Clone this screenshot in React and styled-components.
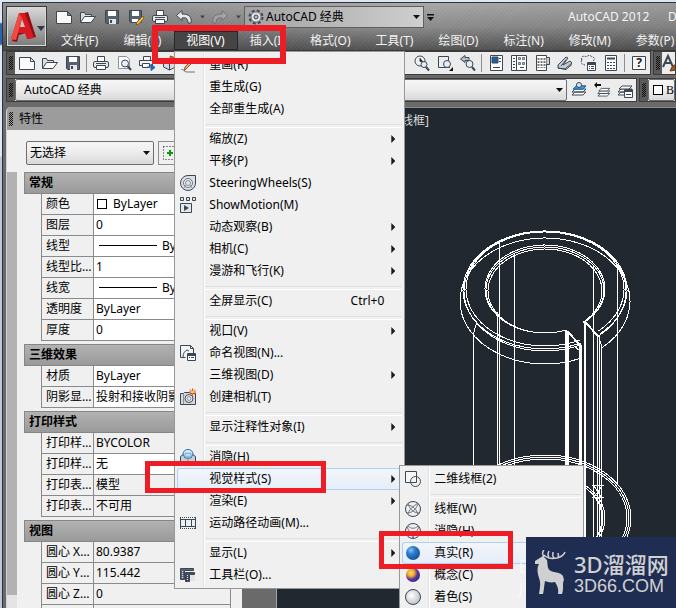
import React from 'react';
import styled, { createGlobalStyle } from 'styled-components';

const GlobalStyle = createGlobalStyle`
  * {
    box-sizing: border-box;
  }

  body {
    margin: 0;
    overflow: hidden;
  }

  body, button, select {
    font-family: 'Noto Sans', 'Noto Sans CJK SC', sans-serif;
    font-size: 12px;
    line-height: 20px;
    color: #000;
  }

  button {
    border: 0;
    padding: 0;
    background: none;
  }

  svg {
    display: block;
  }
`;

const Desktop = styled.div`
  height: 100vh;
  padding: 2px 0 0 2px;
  background: linear-gradient(
    #dde6f0 0 22px,
    #2f62ad 24px 44px,
    #dfe9f5 46px 156px,
    #bcc7da 157px
  );
`;

const Frame = styled.div`
  position: relative;
  height: 100%;
  display: flex;
  flex-direction: column;
  overflow: hidden;
  background: #6a6a6a;
  border-top: 1px solid #30343a;
  border-left: 1px solid #30343a;
`;

const Header = styled.header`
  position: relative;
  z-index: 2;
  display: flex;
  padding-left: 3px;
  background: repeating-linear-gradient(
      135deg,
      rgba(255, 255, 255, 0.04) 0 1px,
      transparent 1px 3px
    ),
    linear-gradient(90deg, rgba(0, 0, 0, 0.16), transparent 60%, rgba(0, 0, 0, 0.08)),
    linear-gradient(#a8a8a8, #8b8b8b 50%, #525252);
  border-bottom: 1px solid #3a3a3a;
`;

const AppButton = styled.button`
  display: grid;
  place-items: center;
  width: 41px;
  height: 41px;
  margin-top: 3px;
  border: 1px solid #3b3b3b;
  box-shadow: inset 0 0 0 1px #d8d8d8;
  background: linear-gradient(#d9d9d9, #7b7b7b);
`;

const HeaderRows = styled.div`
  flex: 1;
  min-width: 0;
`;

const QuickAccess = styled.div`
  display: flex;
  align-items: center;
  height: 28px;
  padding-left: 5px;
`;

const QuickButton = styled.button`
  display: grid;
  place-items: center;
  flex: none;
  width: ${(p) => (p.$narrow ? 12 : 24)}px;
  height: 24px;
`;

const Combo = styled.label`
  position: relative;
  display: flex;
  align-items: center;
  flex: ${(p) => (p.$width ? `0 0 ${p.$width}px` : '1')};
  min-width: 0;
  height: ${(p) => p.$height || 22}px;
  padding-left: 3px;
  border: 1px solid ${(p) => (p.$flat ? '#5f5f5f' : '#6e6e6e')};
  border-radius: ${(p) => (p.$flat ? 0 : 2)}px;
  background: ${(p) =>
    p.$flat
      ? 'linear-gradient(90deg, #a2a2a2, #cfcfcf)'
      : 'linear-gradient(#f6f6f6, #ececec 50%, #d8d8d8)'};

  select {
    flex: 1;
    width: 100%;
    min-width: 0;
    padding: 0 0 0 ${(p) => p.$indent || 0}px;
    border: 0;
    outline: 0;
    appearance: none;
    background: none;
    font-family: ${(p) => (p.$serif ? "'Liberation Serif', serif" : 'inherit')};
  }

  > svg {
    flex: none;
  }

  > svg:last-child {
    margin-right: 3px;
  }
`;

const Title = styled.div`
  flex: 0 0 108px;
  margin-left: auto;
  overflow: hidden;
  white-space: pre;
  color: #f4f4f4;
`;

const MenuBar = styled.nav`
  display: flex;
  height: 19px;
  padding-left: 2px;
`;

const MenuSlot = styled.div`
  position: relative;
  flex: none;

  > button {
    display: block;
    height: 19px;
    padding: 0 13px 0 12px;
    color: ${(p) => (p.$open ? '#fff' : '#f2f2f2')};
    background: ${(p) => (p.$open ? '#454545' : 'none')};
    box-shadow: ${(p) => (p.$open ? 'inset 0 0 0 1px #262626' : 'none')};
    line-height: 19px;
    white-space: nowrap;
  }
`;

const Menu = styled.ul`
  position: absolute;
  z-index: 3;
  left: ${(p) => (p.$sub ? 222 : 0)}px;
  top: ${(p) => (p.$sub ? -3 : 20)}px;
  width: ${(p) => (p.$sub ? 185 : 231)}px;
  margin: 0;
  padding: 2px 2px ${(p) => (p.$sub ? 12 : 2)}px;
  list-style: none;
  border: 1px solid #979797;
  background: linear-gradient(
    90deg,
    #f0f0f0 28px,
    #e0e1e1 28px 29px,
    #fff 29px 30px,
    #f0f0f0 30px
  );
`;

const MenuItem = styled.li`
  position: relative;
  height: 22px;

  > button {
    display: grid;
    grid-template-columns: 29px 1fr auto 18px;
    align-items: center;
    width: 100%;
    height: 22px;
    padding-left: 3px;
    text-align: left;
    white-space: nowrap;
    border-radius: 3px;
    box-shadow: ${(p) => (p.$active ? 'inset 0 0 0 1px #aecff7' : 'none')};
    background: ${(p) =>
      p.$active ? 'linear-gradient(#f3f6fb, #e5edf7)' : 'none'};
  }
`;

const MenuArrow = styled.span`
  justify-self: center;
  width: 4px;
  height: 8px;
  background: #1a1a1a;
  clip-path: polygon(0 0, 100% 50%, 0 100%);
`;

const Separator = styled.li`
  height: 8px;
  padding: 4px 0 2px 28px;

  &::after {
    content: '';
    display: block;
    height: 2px;
    border-top: 1px solid #e0e0e0;
    border-bottom: 1px solid #fff;
  }
`;

const Callout = styled.span`
  position: absolute;
  z-index: 5;
  left: ${(p) => p.$left}px;
  top: ${(p) => p.$top}px;
  width: ${(p) => p.$width}px;
  height: ${(p) => p.$height}px;
  border: ${(p) => p.$line}px solid #ee1c25;
  pointer-events: none;
`;

const ToolRows = styled.div`
  display: flex;
  flex-direction: column;
  gap: 3px;
  padding: 0 0 5px 3px;
`;

const ToolRow = styled.div`
  display: flex;
  gap: 2px;
`;

const Toolbar = styled.div`
  display: flex;
  align-items: center;
  flex: ${(p) => (p.$width ? `0 0 ${p.$width}px` : '1')};
  min-width: 0;
  height: 24px;
  overflow: hidden;
  border: 1px solid #3c3c3c;
  background: #ececec;
`;

const Grip = styled.span`
  display: grid;
  place-items: center;
  flex: 0 0 8px;
  height: 22px;
  background: ${(p) => (p.$plain ? 'none' : '#5a5a5a')};

  &::after {
    content: '';
    width: 4px;
    height: 14px;
    background: repeating-conic-gradient(#111 0 25%, transparent 0 50%) 0 0 / 2px 2px;
  }
`;

const ToolButton = styled.button`
  display: grid;
  place-items: center;
  flex: none;
  width: 23px;
  height: 22px;
  margin-left: ${(p) => (p.$push ? 'auto' : 0)};
`;

const ToolLine = styled.span`
  flex: none;
  width: 1px;
  height: 18px;
  margin: 0 2px;
  background: #8d8d8d;
`;

const Body = styled.div`
  flex: 1;
  display: flex;
  min-height: 0;
  padding-left: 3px;
`;

const Palette = styled.aside`
  flex: 0 0 236px;
  display: flex;
  flex-direction: column;
  border-radius: 5px 0 0 0;
  border-left: 1px solid #d2d2d2;
  background: #f0f0f0;
  overflow: hidden;
`;

const PaletteTitle = styled.div`
  display: flex;
  align-items: center;
  gap: 4px;
  flex: 0 0 23px;
  background: #9c9c9c;
`;

const PaletteTools = styled.div`
  display: flex;
  align-items: center;
  gap: 4px;
  flex: 0 0 42px;
  padding: 4px 0 0 19px;
`;

const PickButton = styled.button`
  display: grid;
  place-items: center;
  width: 24px;
  height: 24px;
  border: 1px solid #8c8c8c;
  background: #f0f0f0;
`;

const PaletteScroll = styled.div`
  flex: 1;
  display: flex;
  gap: 7px;
  min-height: 0;
`;

const Track = styled.div`
  flex: 0 0 10px;
  background: #b2b2b2;
  border-bottom: 13px solid #e4e4e4;
`;

const Sections = styled.div`
  flex: 1;
  margin-right: 11px;
  overflow: hidden;
`;

const Section = styled.section`
  margin-bottom: 3px;

  h3 {
    height: 22px;
    margin: 0;
    padding-left: 4px;
    font-size: 12px;
    line-height: 20px;
    border: 1px solid #868686;
    background: linear-gradient(#b2b2b2, #9a9a9a);
  }
`;

const PropTable = styled.table`
  width: calc(100% - 17px);
  margin-left: 17px;
  table-layout: fixed;
  border-spacing: 0;
  border-left: 1px solid #8a8a8a;

  th, td {
    height: 21px;
    padding: 0 0 0 4px;
    overflow: hidden;
    font-weight: 400;
    text-align: left;
    text-overflow: ellipsis;
    white-space: nowrap;
    border-right: 1px solid #8a8a8a;
    border-bottom: 1px solid #8a8a8a;
  }

  th {
    width: 52px;
    padding-right: 1px;
  }

  td {
    padding-left: 2px;
    text-overflow: clip;
  }
`;

const PropValue = styled.td`
  background: ${(p) => (p.$readOnly ? '#f0f0f0' : '#fff')};
`;

const Swatch = styled.span`
  display: inline-block;
  flex: none;
  width: 10px;
  height: 10px;
  margin: 0 ${(p) => (p.$bar ? 0 : 6)}px 0 1px;
  vertical-align: -1px;
  border: 1px solid #000;
  background: #fff;
`;

const LineSample = styled.span`
  display: inline-block;
  width: 58px;
  height: 1px;
  margin: 0 5px 0 3px;
  vertical-align: 4px;
  background: #000;
`;

const Canvas = styled.main`
  position: relative;
  flex: 1;
  min-width: 0;
  margin-left: 34px;
  overflow: hidden;
  border-top: 1px solid #8a8a8a;
  border-left: 1px solid #a5a5a5;
  background: #212830;
`;

const ViewLabel = styled.div`
  width: 152px;
  padding-top: 3px;
  color: #dcdcdc;
  text-align: right;
  white-space: nowrap;
`;

const Model = styled.svg`
  position: absolute;
  left: 0;
  top: 0;
`;

const Ghost = styled.div`
  position: absolute;
  z-index: 6;
  right: 126px;
  bottom: 12px;
  color: rgba(255, 255, 255, 0.6);
  font-size: 18px;
`;

const Brand = styled.div`
  position: absolute;
  z-index: 7;
  right: 0;
  bottom: 0;
  display: flex;
  align-items: center;
  gap: 6px;
  width: 150px;
  height: 71px;
  padding-left: 8px;
  color: #d0d1d3;
  background: #202d53;
`;

const BrandText = styled.div`
  white-space: nowrap;

  strong {
    display: block;
    font-size: 22px;
    font-weight: 500;
    line-height: 26px;
  }

  span {
    display: block;
    font-family: 'Liberation Sans', sans-serif;
    font-size: 18px;
    line-height: 18px;
  }
`;

const sheets = (
  <>
    <path d="M1 13l3-3h11l-3 3zM1 10l3-3h11l-3 3z" fill="#fff" />
    <path d="M2 7l3-3h10l-3 3z" fill="#fff" />
  </>
);

const glyphs = {
  new: <path d="M.5 2.500h11l4 4v8h-15zM11.500 2.500v4h4" fill="#fafafa" />,
  open: (
    <>
      <path d="M.5 13.500v-10h4l1 2h6v2" fill="#ddd" />
      <path d="M.5 13.500l4-6h11l-4.500 6z" fill="#fafafa" />
    </>
  ),
  save: (
    <>
      <path d="M1.500 1.500h13v13h-12l-1-1z" fill="#57616e" />
      <path d="M4 2h8v5h-8z" fill="#fff" stroke="none" />
      <path d="M5 10h7v5h-7z" fill="#e6e6e6" stroke="none" />
      <path d="M7 11v3" strokeWidth="2" />
    </>
  ),
  saveAs: (
    <>
      <path d="M1.500 1.500h12v12h-11l-1-1z" fill="#57616e" />
      <path d="M4 2h7v5h-7zM4 10h6v3h-6z" fill="#fff" stroke="none" />
      <path d="M15 7l-6 6-1 3 3-1 5-6z" fill="#f2c14e" stroke="#8a5a12" />
    </>
  ),
  print: (
    <>
      <path d="M4.500 6v-4.500h7v4.500" fill="#fff" />
      <rect x=".5" y="6.500" width="15" height="6" rx="1.500" fill="#e8e8e8" />
      <path d="M3.500 10.500h9v4h-9z" fill="#fff" />
      <path d="M3 8.500h10" />
    </>
  ),
  preview: (
    <>
      <path d="M2.500 1.500h8l3 3v9h-11z" fill="#fff" stroke="#8a929c" />
      <circle cx="9" cy="8.500" r="3.500" fill="#e9eef4" />
      <path d="M11.500 11l3.500 4" strokeWidth="2" />
    </>
  ),
  publish: (
    <>
      <path d="M4.500 5v-3.500h7v3.500M.5 5.500h13v5h-13z" fill="#f4f4f4" />
      <path d="M3.500 8.500h7v4h-7z" fill="#fff" />
      <path d="M8 12h5M12 9l4 3.500-4 3z" fill="#1c6ab2" stroke="#1c6ab2" />
    </>
  ),
  cube: (
    <>
      <path d="M1.500 6l6-3 6 3v6l-6 3-6-3zM1.500 6l6 3 6-3M7.500 9v6" fill="#d5dbe2" />
      <path d="M8 1l6 2-3 4z" fill="#e8622a" stroke="#b84412" />
    </>
  ),
  undo: <path d="M6 1.500L.5 6.500 6 11.500V9c4-1 6 .5 6 5h3c1-6-2-9-9-9z" fill="#e9e9e9" />,
  redo: (
    <path
      d="M10 1.500l5.500 5-5.500 5V9c-4-1-6 .5-6 5H1c-1-6 2-9 9-9z"
      fill="#a3a3a3"
      stroke="#6d7279"
    />
  ),
  gear: (
    <>
      <circle cx="8" cy="8" r="6.500" fill="none" strokeWidth="2" strokeDasharray="3 2.100" />
      <circle cx="8" cy="8" r="5" fill="#e6e6e6" stroke="#6c7580" />
      <circle cx="8" cy="8" r="2" fill="#bbb" />
    </>
  ),
  zoomTime: (
    <>
      <circle cx="6" cy="6" r="5" fill="#f3f3f3" />
      <path d="M6 3v3.500h3" />
      <circle cx="10" cy="9.500" r="3" fill="#e4edf5" />
      <path d="M12 12l3 3.500" strokeWidth="2" />
    </>
  ),
  zoomWindow: (
    <>
      <path d="M1.500 1.500h10v11h-10z" fill="none" />
      <circle cx="10" cy="9" r="3.500" fill="#e4edf5" />
      <path d="M12 12l1 1" />
      <path d="M16 12v4h-4z" fill="#111" stroke="none" />
    </>
  ),
  zoomBack: (
    <>
      <path d="M5 .5L.5 4 5 7.500V5.500h4v-3h-4z" fill="#b8bec6" />
      <circle cx="9.500" cy="9" r="3.500" fill="#e4edf5" />
      <path d="M12 12l3 3.500" strokeWidth="2" />
    </>
  ),
  properties: (
    <>
      <path d="M2.500.5h12v15h-12z" fill="#fff" />
      <path d="M4 2h6v6h-6z" fill="#1f5fa5" />
      <path d="M11 3.500h2M11 6.500h2M5 12.500h7" />
    </>
  ),
  designCenter: (
    <>
      <path d="M.5.500h15v15h-15zM5.500.500v15" fill="#fff" />
      <path d="M2 3.500h2M2 6.500h2M2 9.500h2M2 12.500h2M9 12.500h4" />
      <path
        d="M7.500 2.500h2v2h-2zM11.500 2.500h2v2h-2zM7.500 7.500h2v2h-2zM11.500 7.500h2v2h-2z"
        fill="#bbb"
        stroke="#6c7580"
      />
    </>
  ),
  toolPalette: (
    <>
      <path d="M2.500.5h10v15h-10z" fill="#fff" />
      <path d="M12.500 2.500h3v7h-3" fill="#ccc" />
      <path
        d="M4.500 3v10M7.500 3v10M10.500 3v10"
        stroke="#777"
        strokeWidth="2"
        strokeDasharray="2 1"
      />
    </>
  ),
  sheetSet: (
    <>
      <path d="M1 10l8-8 2 1-5 7 7-4 2 2-7 6-7-1z" fill="#c4cad1" />
      <path d="M1 13l8 1.500 6-5M4 11l5-6" fill="none" />
    </>
  ),
  markup: (
    <>
      <path
        d="M2 5c-2-3 2-5 4-3 2-2 5-2 6 0 3 0 3 3 1 4M2 5c-2 2 0 5 3 5"
        fill="none"
        strokeDasharray="2 1"
      />
      <path d="M7.500 7.500h8v8h-8z" fill="#fff" />
      <path d="M8 9h7" strokeWidth="2" />
      <path d="M9 11.500h1M11 11.500h3M9 13.500h1M11 13.500h3" />
    </>
  ),
  calc: (
    <>
      <path d="M2.500.5h11v15h-11z" fill="#fff" />
      <path d="M4 3.500h8" strokeWidth="2" />
      <path d="M4 7.500h8M4 10.500h8M4 13.500h8" strokeDasharray="2 1" />
    </>
  ),
  brush: (
    <>
      <path d="M1 12L6 1l5 11M3 8h6" fill="none" strokeWidth="2" />
      <path d="M15 8l-5 4-2 4 6-1 3-5z" fill="#a6561f" stroke="#6f3a15" />
    </>
  ),
  layers: (
    <>
      {sheets}
      <path d="M2 7l3-3h10l-3 3z" fill="#3a9be0" stroke="#1c6ab2" />
      <circle cx="8" cy="3" r="2.500" fill="#dce6f0" />
    </>
  ),
  layerBack: (
    <>
      <g transform="translate(3 3) scale(.85)">{sheets}</g>
      <path d="M0 3l3-3v2h4v2H3v2z" fill="#111" stroke="none" />
    </>
  ),
  layerStates: (
    <>
      {sheets}
      <path d="M7.500 7.500h8v8h-8z" fill="#fff" />
      <path d="M8 9h7" strokeWidth="2" />
      <path d="M9 12.500h5" />
    </>
  ),
  pencil: (
    <>
      <path d="M14 4L7 11l-3 3 1-4 7-7z" fill="#e9b56b" stroke="#8a5a2a" />
      <path d="M1 13c2-2 3 2 6 2h8" fill="none" stroke="#777" />
    </>
  ),
  wheel: (
    <>
      <path d="M8 .5h7.500V8A7.500 7.500 0 1 1 8 .5z" fill="#dde1e6" />
      <circle cx="8" cy="8" r="4.500" fill="#eee" stroke="#6c7580" />
      <circle cx="8" cy="8" r="2.500" fill="#e2e6ec" stroke="#8a929c" />
      <path d="M4 13l2-3M12 13l-2-3" stroke="#8a929c" />
    </>
  ),
  motion: (
    <>
      <path d="M.5.500h3v3h-3zM6.500.500h3v3h-3zM12.500.500h3v3h-3zM.5 6.500h11v9h-11z" fill="#e4e7eb" />
      <path d="M4 8l5 3-5 3z" fill="#3c4754" stroke="none" />
    </>
  ),
  namedView: (
    <>
      <path d="M.5 12.500v-12h10l3 3v5M10.500.5v3h3M.5 12.500h5" fill="#f4f4f4" />
      <path d="M3 12c0-4 2-6 4-7l2 1" fill="none" />
      <path d="M7.500 8.500h8v7h-8z" fill="#fff" />
      <path d="M8 10h7" strokeWidth="2" />
      <path d="M9 12.500h1M11 12.500h3" />
    </>
  ),
  camera: (
    <>
      <path d="M.5 4.500h3l1-1h5l1 1h5v11h-15z" fill="#d5d9de" />
      <path d="M3.500 5v10" stroke="#8a929c" />
      <circle cx="9" cy="9.500" r="4" fill="#f2f4f6" />
      <circle cx="9" cy="9.500" r="2" fill="#dfe5ec" stroke="#8a929c" />
      <path d="M12.500-.5v7M9 3h7M10 .5l5 5M15 .5l-5 5" stroke="#e2461f" />
      <circle cx="12.500" cy="3" r="1.500" fill="#ffd23c" stroke="none" />
    </>
  ),
  hide: (
    <>
      <path d="M.5 7.500l4-3h7l4 3v8h-15z" fill="#c9ced4" />
      <path d="M8 15V9" stroke="#8a929c" />
      <path d="M3 5a5 4.500 0 0 1 10 0l-2 4H5z" fill="#e4f2fb" stroke="#1c6ab2" />
      <path d="M5 4h6v4H5z" fill="#bcdcf2" stroke="#6aaad6" />
    </>
  ),
  film: (
    <>
      <path d="M0 2.500h16v11H0z" fill="#eef0f2" stroke="none" />
      <path d="M0 2.500h16M0 13.500h16" strokeDasharray="1 1" />
      <path d="M0 4.500h16M0 11.500h16M5.500 4v8M11.500 4v8M.5 2v12M15.500 2v12" />
    </>
  ),
  bars: (
    <>
      <path d="M.5 1.500h13v2h-9v9h-4z" fill="#5a6470" />
      <path d="M5.500 5.500h9v2h-5v7h-4z" fill="#444e5a" />
      <path d="M10 8h5v6h-5z" fill="#e2e4e6" stroke="none" />
      <path d="M2.500 4v8M7.500 8v6" stroke="#ddd" strokeDasharray="1 1" />
    </>
  ),
  wire2d: (
    <>
      <path d="M.5.500h11v11h-11z" fill="#f6f6f6" />
      <circle cx="10.500" cy="10.500" r="5" fill="none" />
    </>
  ),
  wire3d: (
    <>
      <circle cx="8" cy="8" r="7.500" fill="#f0f0f0" />
      <path
        d="M3 2c1 5 5 10 11 10M13 2c-1 5-5 10-11 10M3 13c1-4 4-7 10-11M13 14C12 8 7 4 2 4"
        fill="none"
        stroke="#6c7580"
      />
    </>
  ),
  hidden3d: (
    <>
      <circle cx="8" cy="8" r="7.500" fill="#f0f0f0" />
      <path
        d="M2 4c3 6 5 7 6 11M14 4c-3 6-5 7-6 11M3 3c3 3 7 3 10 0"
        fill="none"
        stroke="#6c7580"
      />
    </>
  ),
  real: <circle cx="8" cy="8" r="7" fill="url(#ballBlue)" stroke="none" />,
  concept: <circle cx="8" cy="8" r="7" fill="url(#ballWarm)" stroke="none" />,
  shaded: <circle cx="8" cy="8" r="7.500" fill="url(#ballGrey)" />,
  pick: (
    <>
      <path d="M1.500 1.500h13v13h-13z" fill="none" stroke="#222" strokeDasharray="1 2" />
      <path d="M8 5v6M5 8h6" stroke="#0c9a0c" strokeWidth="2" />
    </>
  ),
};

const Icon = ({ name }) => (
  <svg
    width="16"
    height="16"
    viewBox="0 0 16 16"
    stroke="#3c4754"
    strokeWidth="1"
    overflow="visible"
    aria-hidden="true"
  >
    {glyphs[name]}
  </svg>
);

const Caret = ({ width = 7, color = '#111', bar }) => (
  <svg width={width} height={bar ? 7 : 4} viewBox={bar ? '0 -3 7 7' : '0 0 7 4'} aria-hidden="true">
    {bar && <path d="M0-3h7v1.500h-7z" fill={color} />}
    <path d="M0 0h7L3.500 4z" fill={color} />
  </svg>
);

const GradientDefs = styled.svg`
  position: absolute;
`;

const Gradients = () => (
  <GradientDefs width="0" height="0" aria-hidden="true">
    <defs>
      <radialGradient id="ballBlue" cx=".35" cy=".3" r=".7">
        <stop offset="0" stopColor="#8cc4f0" />
        <stop offset=".4" stopColor="#2e7fd0" />
        <stop offset="1" stopColor="#17549c" />
      </radialGradient>
      <radialGradient id="ballWarm" cx=".35" cy=".35" r=".7">
        <stop offset="0" stopColor="#ffe36a" />
        <stop offset=".35" stopColor="#f4a92c" />
        <stop offset=".65" stopColor="#5b3a9c" />
        <stop offset="1" stopColor="#34268c" />
      </radialGradient>
      <radialGradient id="ballGrey" cx=".4" cy=".4" r=".65">
        <stop offset="0" stopColor="#fff" />
        <stop offset="1" stopColor="#b9bfc6" />
      </radialGradient>
    </defs>
  </GradientDefs>
);

const visualStyles = [
  { text: '二维线框(2)', icon: 'wire2d' },
  null,
  { text: '线框(W)', icon: 'wire3d' },
  { text: '消隐(H)', icon: 'hidden3d' },
  {
    text: '真实(R)',
    icon: 'real',
    active: true,
    callout: { $left: -23, $top: -11, $width: 134, $height: 38, $line: 5 },
  },
  { text: '概念(C)', icon: 'concept' },
  { text: '着色(S)', icon: 'shaded' },
];

const viewMenu = [
  { text: '重画(R)', icon: 'pencil' },
  { text: '重生成(G)' },
  { text: '全部重生成(A)' },
  null,
  { text: '缩放(Z)', more: true },
  { text: '平移(P)', more: true },
  { text: 'SteeringWheels(S)', icon: 'wheel' },
  { text: 'ShowMotion(M)', icon: 'motion' },
  { text: '动态观察(B)', more: true },
  { text: '相机(C)', more: true },
  { text: '漫游和飞行(K)', more: true },
  null,
  { text: '全屏显示(C)', keys: 'Ctrl+0' },
  null,
  { text: '视口(V)', more: true },
  { text: '命名视图(N)...', icon: 'namedView' },
  { text: '三维视图(D)', more: true },
  { text: '创建相机(T)', icon: 'camera' },
  null,
  { text: '显示注释性对象(I)', more: true },
  null,
  { text: '消隐(H)', icon: 'hide' },
  {
    text: '视觉样式(S)',
    more: true,
    active: true,
    items: visualStyles,
    callout: { $left: -32, $top: -7, $width: 181, $height: 32, $line: 5 },
  },
  { text: '渲染(E)', more: true },
  { text: '运动路径动画(M)...', icon: 'film' },
  null,
  { text: '显示(L)', more: true },
  { text: '工具栏(O)...', icon: 'bars' },
];

const menus = [
  '文件(F)',
  '编辑(E)',
  '视图(V)',
  '插入(I)',
  '格式(O)',
  '工具(T)',
  '绘图(D)',
  '标注(N)',
  '修改(M)',
  '参数(P)',
];

const sections = [
  {
    title: '常规',
    rows: [
      ['颜色', 'ByLayer', 'swatch'],
      ['图层', '0'],
      ['线型', 'ByLayer', 'line'],
      ['线型比例', '1'],
      ['线宽', 'ByLayer', 'line'],
      ['透明度', 'ByLayer'],
      ['厚度', '0'],
    ],
  },
  {
    title: '三维效果',
    rows: [
      ['材质', 'ByLayer'],
      ['阴影显示', '投射和接收阴影'],
    ],
  },
  {
    title: '打印样式',
    rows: [
      ['打印样式', 'BYCOLOR', 'fixed'],
      ['打印样式表', '无'],
      ['打印表附着到', '模型', 'fixed'],
      ['打印表类型', '不可用', 'fixed'],
    ],
  },
  {
    title: '视图',
    rows: [
      ['圆心 X 坐标', '80.9387', 'fixed'],
      ['圆心 Y 坐标', '115.442', 'fixed'],
      ['圆心 Z 坐标', '0', 'fixed'],
      ['', '', 'fixed'],
    ],
  },
];

const MenuList = ({ items, sub }) => (
  <Menu $sub={sub}>
    {items.map((item, i) =>
      item ? (
        <MenuItem key={item.text} $active={item.active}>
          <button type="button">
            <span>{item.icon && <Icon name={item.icon} />}</span>
            <span>{item.text}</span>
            <span>{item.keys}</span>
            {item.more && <MenuArrow />}
          </button>
          {item.items && <MenuList items={item.items} sub />}
          {item.callout && <Callout {...item.callout} />}
        </MenuItem>
      ) : (
        <Separator key={i} />
      )
    )}
  </Menu>
);

const Dropdown = ({ label, value, icon, caret = true, ...rest }) => (
  <Combo {...rest}>
    {icon}
    <select aria-label={label} defaultValue={value}>
      <option>{value}</option>
    </select>
    {caret && <Caret />}
  </Combo>
);

const Tools = ({ names }) =>
  names.map((name) => (
    <ToolButton key={name} type="button" aria-label={name}>
      <Icon name={name} />
    </ToolButton>
  ));

const PropertyPalette = () => (
  <Palette>
    <PaletteTitle>
      <Grip $plain />
      特性
    </PaletteTitle>
    <PaletteTools>
      <Dropdown label="选择" value="无选择" $width={128} $height={24} />
      <PickButton type="button" aria-label="快速选择">
        <Icon name="pick" />
      </PickButton>
    </PaletteTools>
    <PaletteScroll>
      <Track />
      <Sections>
        {sections.map(({ title, rows }) => (
          <Section key={title}>
            <h3>{title}</h3>
            <PropTable>
              <tbody>
                {rows.map(([name, value, kind]) => (
                  <tr key={name}>
                    <th scope="row">{name}</th>
                    <PropValue $readOnly={kind === 'fixed'}>
                      {kind === 'swatch' && <Swatch />}
                      {kind === 'line' && <LineSample />}
                      {value}
                    </PropValue>
                  </tr>
                ))}
              </tbody>
            </PropTable>
          </Section>
        ))}
      </Sections>
    </PaletteScroll>
  </Palette>
);

// elliptical arc that runs clockwise from one angle to another, in degrees
const Arc = ({ cx, cy, rx, ry, from, to }) => {
  const point = (deg) => {
    const t = (deg * Math.PI) / 180;
    return `${cx + rx * Math.cos(t)} ${cy + ry * Math.sin(t)}`;
  };
  return <path d={`M${point(from)}A${rx} ${ry} 0 1 1 ${point(to)}`} />;
};

const Cylinder = () => (
  <Model
    width="399"
    height="500"
    viewBox="277 108 399 500"
    fill="none"
    stroke="#fff"
    shapeRendering="crispEdges"
    aria-hidden="true"
  >
    {/* outer rim */}
    <Arc cx={545} cy={291} rx={81} ry={60} from={64} to={48} />
    <Arc cx={545} cy={289} rx={79} ry={57} from={64} to={48} />
    <Arc cx={545} cy={290} rx={82} ry={59} from={64} to={48} />
    <Arc cx={545} cy={301} rx={85} ry={63} from={66} to={48} />
    {/* bore */}
    <Arc cx={545} cy={289} rx={60} ry={44} from={69} to={48} />
    <Arc cx={545} cy={290} rx={59} ry={43} from={69} to={48} />
    <Arc cx={545} cy={291} rx={57} ry={42} from={69} to={48} />
    {/* slot */}
    <path d="M567 331l14 15M585 322l14 15" strokeWidth="2" />
    <path d="M574 346l6 5M599 337l3 11M477 322l-4 13" />
    {/* edges */}
    <path d="M473.500 335V608M497.500 312V608M499.500 242V608M514.500 253V608M593.500 266V608M597.500 335V608M599.500 338V608M601.500 348V608M617.500 265V485" />
    <path d="M567 331V608" strokeWidth="4" />
    <path d="M580.500 345V608" strokeWidth="3" />
    <path d="M585 322V608" strokeWidth="2" />
    {/* base */}
    <ellipse cx="545" cy="518" rx="86" ry="63" />
    <ellipse cx="545" cy="518" rx="84" ry="61" />
    <ellipse cx="545" cy="518" rx="82" ry="59" />
    <ellipse cx="545" cy="518" rx="60" ry="44" />
    <ellipse cx="545" cy="518" rx="58" ry="42" />
    <ellipse cx="545" cy="518" rx="57" ry="43" />
    <path d="M592 485.500h12M592 497.500h12M594 486l7 11M602 486l-8 11" />
  </Model>
);

const App = () => {
  return (
    <Desktop>
      <GlobalStyle />
      <Gradients />
      <Frame>
        <Header>
          <AppButton type="button" aria-label="应用程序菜单">
            <svg width="37" height="37" viewBox="0 0 37 37" aria-hidden="true">
              <path d="M4 33L12 6l8-2 8 25-8 2-2-6-7 2-2 7z" fill="#8e1014" />
              <path d="M3 31L11 5h6l9 25-7 1-2-6H10l-2 7z" fill="#d9191f" />
              <path d="M3 31L11 5l3 5-6 22z" fill="#f04b42" />
              <path d="M12 19l2-8 3 8z" fill="#c9c9c9" />
              <path d="M29 18h8l-4 5z" fill="#333a44" />
            </svg>
          </AppButton>
          <HeaderRows>
            <QuickAccess>
              {['new', 'open', 'save', 'saveAs', 'print', 'undo'].map((name) => (
                <QuickButton key={name} type="button" aria-label={name}>
                  <Icon name={name} />
                </QuickButton>
              ))}
              <QuickButton type="button" $narrow aria-label="undo list">
                <Caret width={5} color="#444" />
              </QuickButton>
              <QuickButton type="button" aria-label="redo">
                <Icon name="redo" />
              </QuickButton>
              <QuickButton type="button" $narrow aria-label="redo list">
                <Caret width={5} color="#444" />
              </QuickButton>
              <Dropdown
                label="工作空间"
                value="AutoCAD 经典"
                icon={<Icon name="gear" />}
                $flat
                $width={180}
                $indent={2}
              />
              <QuickButton type="button" $narrow aria-label="自定义">
                <Caret bar />
              </QuickButton>
              <Title>{'AutoCAD 2012      Drawing1.dwg'}</Title>
            </QuickAccess>
            <MenuBar>
              {menus.map((name) => {
                const open = name === '视图(V)';
                return (
                  <MenuSlot key={name} $open={open}>
                    <button type="button">{name}</button>
                    {open && <MenuList items={viewMenu} />}
                    {open && (
                      <Callout $left={-22} $top={-6} $width={134} $height={39} $line={6} />
                    )}
                  </MenuSlot>
                );
              })}
            </MenuBar>
          </HeaderRows>
        </Header>

        <ToolRows>
          <ToolRow>
            <Toolbar>
              <Grip />
              <Tools names={['new', 'open', 'save']} />
              <ToolLine />
              <Tools names={['print', 'preview', 'publish', 'cube']} />
              <ToolButton type="button" $push aria-label="zoomTime">
                <Icon name="zoomTime" />
              </ToolButton>
              <Tools names={['zoomWindow', 'zoomBack']} />
              <ToolLine />
              <Tools
                names={['properties', 'designCenter', 'toolPalette', 'sheetSet', 'markup', 'calc']}
              />
              <ToolLine />
              <ToolButton type="button" aria-label="帮助">
                <svg width="16" height="16" viewBox="0 0 16 16" aria-hidden="true">
                  <path d="M1.500 1.500h13v13h-13z" fill="#f6f6f6" stroke="#3c4754" />
                  <text x="8" y="12" textAnchor="middle" fontSize="12" fontWeight="700" fill="#222">
                    ?
                  </text>
                </svg>
              </ToolButton>
            </Toolbar>
            <Toolbar $width={23}>
              <Grip />
              <Icon name="brush" />
            </Toolbar>
          </ToolRow>
          <ToolRow>
            <Toolbar $width={240}>
              <Grip />
              <Dropdown label="工作空间" value="AutoCAD 经典" $indent={5} />
            </Toolbar>
            <Toolbar>
              <Grip />
              <Dropdown label="图层" value="0" />
              <Tools names={['layers', 'layerBack', 'layerStates']} />
            </Toolbar>
            <Toolbar $width={37}>
              <Grip />
              <Dropdown
                label="颜色"
                value="ByLayer"
                icon={<Swatch $bar />}
                caret={false}
                $serif
                $indent={3}
              />
            </Toolbar>
          </ToolRow>
        </ToolRows>

        <Body>
          <PropertyPalette />
          <Canvas>
            <ViewLabel>[-][自定义视图][二维线框]</ViewLabel>
            <Cylinder />
          </Canvas>
        </Body>
      </Frame>
      <Ghost>
        Bai
        <br />
        jing
      </Ghost>
      <Brand>
        <svg width="34" height="46" viewBox="0 0 34 46" fill="#cfd0d2" aria-hidden="true">
          <path d="M1 11l8-5 4 4c1 6 0 9 4 11 5 2 9 1 12 5l1 4c-2 3 0 9-2 14h-4c1-5-1-9-3-12-4 1-7 0-10-1-1 5-1 9-2 13H5c1-6 2-11 0-16C3 22 3 17 5 14l-4 0z" />
          <path
            d="M10 7C8 4 8 2 10 0M10 5c3 3 8 4 13 3 4-1 7-3 8-6M15 7c-2-2-1-4 0-6M20 8c-2-2-1-4-1-6M24 7c1-2 0-3 0-4"
            fill="none"
            stroke="#cfd0d2"
            strokeWidth="1.500"
          />
        </svg>
        <BrandText>
          <strong>3D溜溜网</strong>
          <span>3D66.COM</span>
        </BrandText>
      </Brand>
    </Desktop>
  );
};

export default App;
